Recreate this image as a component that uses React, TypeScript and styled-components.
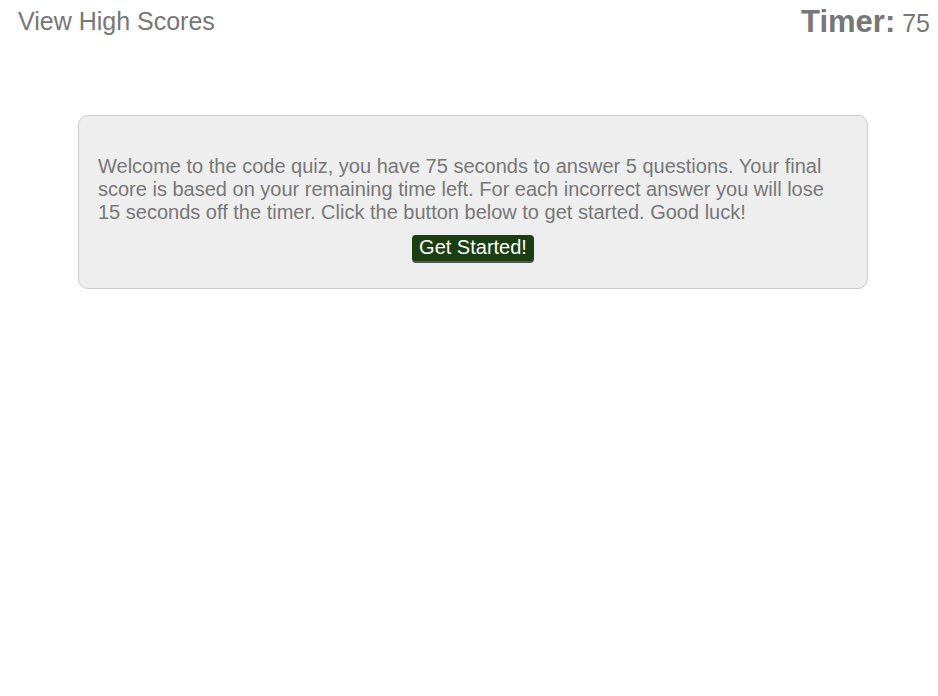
import React from "react";
import styled, { createGlobalStyle } from "styled-components";

const Global = createGlobalStyle`
  html, body { margin: 0; padding: 0; background: #fff; }
  body { font-family: "Liberation Sans", Arial, sans-serif; color: #777; }
`;

const Header = styled.header`
  display: flex;
  justify-content: space-between;
  align-items: flex-start;
  padding: 0 8px 0 18px;
  height: 46px;
`;

const Link = styled.a`
  margin-top: 7px;
  font-size: 25px;
  color: #777;
  text-decoration: none;
`;

const Timer = styled.div`
  margin-top: 4px;
  font-size: 25px;
  color: #777;
`;

const TimerLabel = styled.span`
  font-size: 31px;
  font-weight: bold;
`;

const Main = styled.main`
  padding: 69px 70px 0 78px;
`;

const Card = styled.section`
  box-sizing: border-box;
  width: 790px;
  height: 174px;
  background: #eee;
  border: 1px solid #ccc;
  border-radius: 10px;
  padding: 39px 19px 0 19px;
  display: flex;
  flex-direction: column;
  align-items: center;
`;

const Intro = styled.p`
  margin: 0;
  font-size: 20px;
  line-height: 23px;
  color: #777;
  align-self: stretch;
`;

const StartButton = styled.button`
  margin-top: 11px;
  font-family: "Liberation Sans", Arial, sans-serif;
  font-size: 20px;
  line-height: 23px;
  color: #fff;
  background: #1a3d12;
  border: none;
  border-radius: 4px;
  padding: 1px 7px 2px;
  box-shadow: 0 2px 0 #555;
  cursor: pointer;
`;

export default function App() {
  return (
    <>
      <Global />
      <Header>
        <Link href="#">View High Scores</Link>
        <Timer>
          <TimerLabel>Timer:</TimerLabel> 75
        </Timer>
      </Header>
      <Main>
        <Card>
          <Intro>
            Welcome to the code quiz, you have 75 seconds to answer 5 questions. Your final
            score is based on your remaining time left. For each incorrect answer you will lose
            15 seconds off the timer. Click the button below to get started. Good luck!
          </Intro>
          <StartButton>Get Started!</StartButton>
        </Card>
      </Main>
    </>
  );
}
